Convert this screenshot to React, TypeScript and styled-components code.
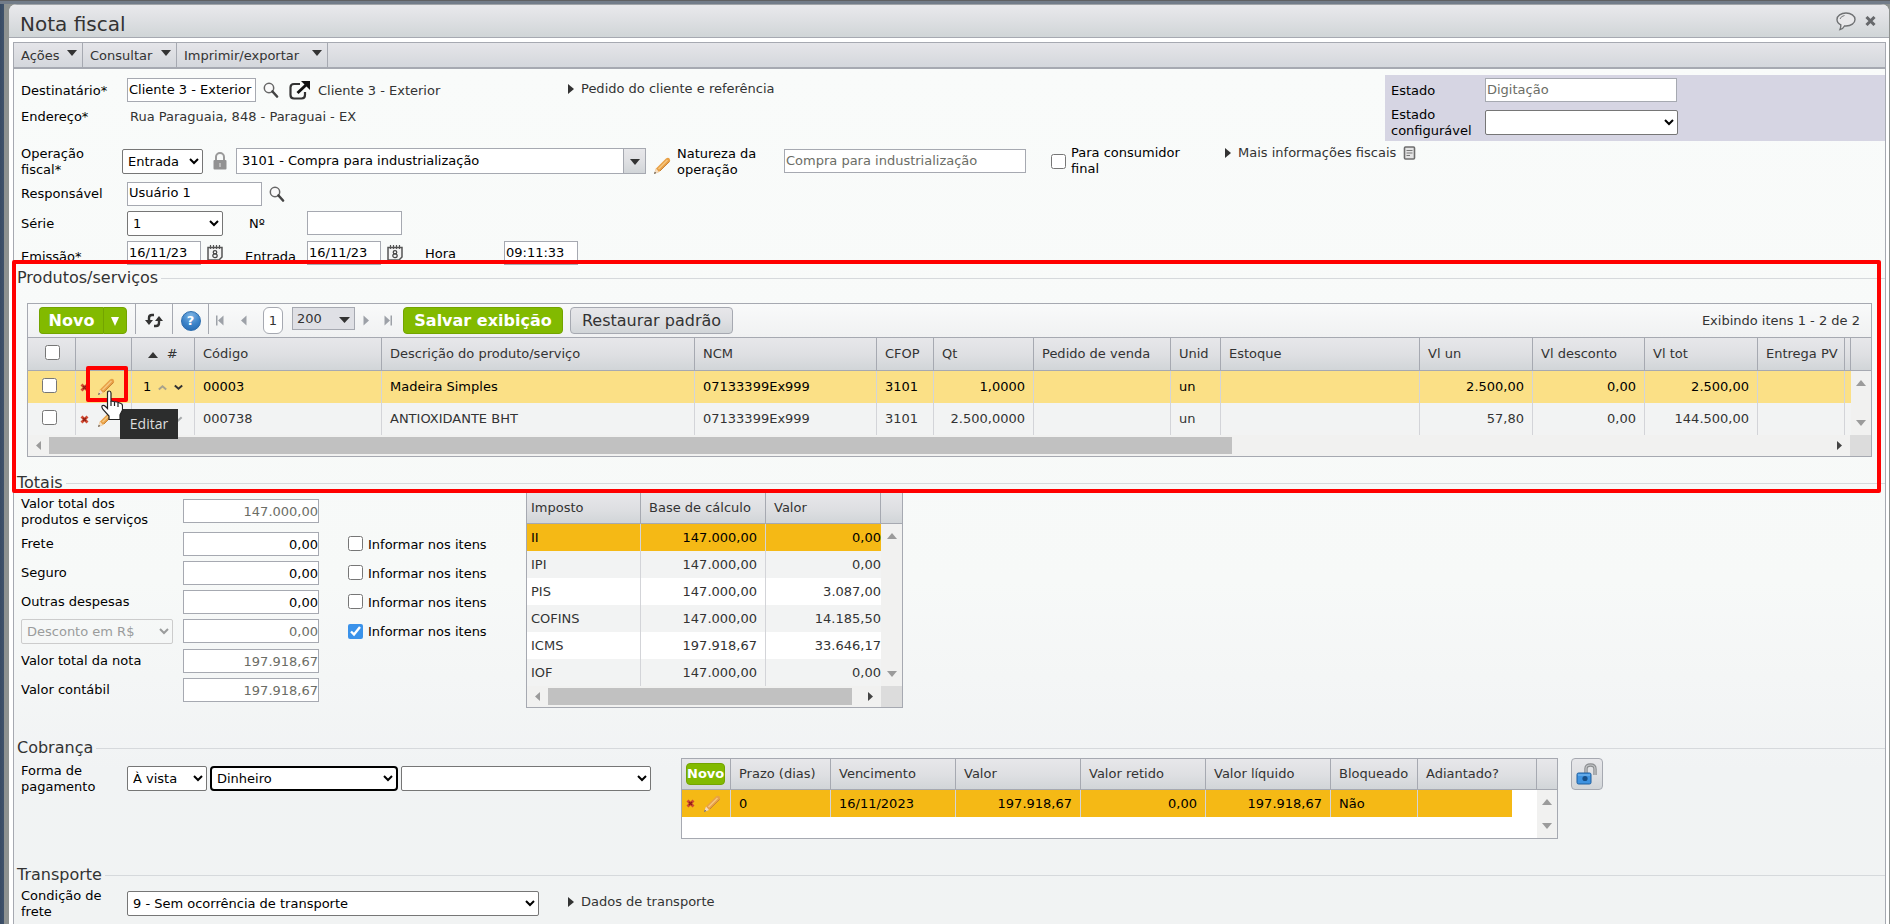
import React from "react";
import styled, { createGlobalStyle, css } from "styled-components";

const line = "#a6a9b1";
const softLine = "#d3d4d8";
const headFill = "linear-gradient(#e7e7ea, #dfe0e3 50%, #d1d5d8)";

const GlobalStyle = createGlobalStyle`
  * { box-sizing: border-box; }
  body {
    margin: 0;
    background: #3a4d66;
    color: #333;
    font: 13px/16px "DejaVu Sans", Verdana, sans-serif;
  }
  button, input, select { font: inherit; color: inherit; }
  a { color: inherit; text-decoration: none; }
  table { border-collapse: separate; border-spacing: 0; table-layout: fixed; }
`;

/* ---------- window ---------- */

const Desktop = styled.div`
  min-height: 100vh;
  display: flex;
  padding: 4px 1px 0 4px;
  background: linear-gradient(#5f6062 0 1px, #727c89 1px 4px, transparent 4px),
    linear-gradient(90deg, #384b64, #3f526b 4px, #8e9290 4px 100%);
`;

const Window = styled.div`
  flex: 1;
  min-width: 0;
  display: flex;
  flex-direction: column;
  margin-left: 5px;
  border-radius: 8px 8px 0 0;
  background: #fff;
  overflow: hidden;
`;

const TitleBar = styled.header`
  display: flex;
  align-items: center;
  gap: 9px;
  height: 34px;
  padding: 0 13px 0 11px;
  border-top: 1px solid #a0a4a8;
  border-bottom: 1px solid ${line};
  background: linear-gradient(#e9e9ec, #dddfe2 50%, #d0d5d7);
`;

const WindowTitle = styled.h1`
  flex: 1;
  margin: 0;
  padding-top: 6px;
  font-size: 20px;
  line-height: 24px;
  font-weight: 400;
`;

const IconButton = styled.button`
  display: inline-flex;
  flex: none;
  padding: 0;
  border: 0;
  background: none;
  cursor: pointer;
  svg { display: block; }
`;

const Frame = styled.div`
  flex: 1;
  display: flex;
  flex-direction: column;
  margin: 4px 3px 0 4px;
  border: 1px solid ${line};
  border-bottom: 0;
`;

const MenuBar = styled.nav`
  display: flex;
  height: 26px;
  border-bottom: 2px solid ${line};
  background: linear-gradient(#e5e5e9, #d4d7dc);
`;

const MenuButton = styled.button<{ $w: number }>`
  display: flex;
  align-items: center;
  justify-content: space-between;
  min-width: ${(p) => p.$w}px;
  padding: 2px 5px 0 7px;
  border: 0;
  border-right: 1px solid ${line};
  background: none;
  svg { margin-bottom: 6px; }
`;

const Content = styled.main`
  flex: 1;
  background: linear-gradient(#f9fbfa, #f7f9f8 60%, #f1f3f4 82%, #f1f3f3);
`;

/* ---------- form parts ---------- */

const Row = styled.div<{ $h: number }>`
  display: flex;
  align-items: center;
  min-height: ${(p) => p.$h}px;
  padding-left: 7px;
`;

const Label = styled.label<{ $w?: number; $low?: boolean }>`
  flex: none;
  width: ${(p) => (p.$w ? p.$w + "px" : "auto")};
  padding-top: ${(p) => (p.$low ? 7 : 1)}px;
  color: #000;
`;

const Static = styled.span`
  padding-top: 1px;
`;

const TextBox = styled.input<{ $w: number; $num?: boolean }>`
  flex: none;
  width: ${(p) => p.$w}px;
  height: 24px;
  padding: 0 1px 2px;
  border: 1px solid ${line};
  border-radius: 0;
  background: #fff;
  color: #000;
  outline: 0;
  ${(p) => p.$num && css`padding: 1px 0 0; text-align: right;`}
  &:read-only { color: #6b6d66; }
`;

const Select = styled.select<{ $w: number; $strong?: boolean }>`
  flex: none;
  width: ${(p) => p.$w}px;
  height: 25px;
  padding: 0 1px;
  border: ${(p) => (p.$strong ? "2px solid #000" : "1px solid #767676")};
  border-radius: ${(p) => (p.$strong ? 4 : 2)}px;
  background-color: #fff;
  color: #000;
  &:disabled { border-color: #ccc; color: #9a9c9c; background-color: transparent; opacity: 1; }
`;

const Check = styled.input.attrs({ type: "checkbox" })`
  flex: none;
  width: 15px;
  height: 15px;
  margin: 0;
  accent-color: #3a92ea;
`;

const CheckLabel = styled.label<{ $w?: number }>`
  display: flex;
  align-items: center;
  gap: 5px;
  width: ${(p) => (p.$w ? p.$w + "px" : "auto")};
  color: #000;
`;

const CheckText = styled.span`
  padding-top: 2px;
`;

const Space = styled.span<{ $w: number; $low?: boolean }>`
  flex: none;
  display: inline-flex;
  align-items: center;
  justify-content: center;
  gap: 10px;
  width: ${(p) => p.$w}px;
  padding-top: ${(p) => (p.$low ? 10 : 0)}px;
`;

const Disclosure = styled.a<{ $high?: boolean }>`
  display: flex;
  align-items: center;
  gap: 7px;
  padding-bottom: ${(p) => (p.$high ? 16 : 2)}px;
`;

const TopArea = styled.div`
  display: flex;
  align-items: flex-start;
  padding: 6px 0 2px;
`;

const TopLeft = styled.div`
  flex: 1;
`;

const DestinationPair = styled.div`
  display: flex;
  align-items: center;
  width: 441px;
`;

const StatePanel = styled.div`
  display: grid;
  grid-template-columns: 94px 1fr;
  align-items: center;
  row-gap: 4px;
  width: 500px;
  padding: 3px 6px 2px;
  background: #d6d5e3;
`;

const Combo = styled.div`
  display: flex;
  width: 410px;
  height: 26px;
  border: 1px solid ${line};
  background: #fff;
  input { flex: 1; min-width: 0; border: 0; padding: 0 5px; background: none; color: #000; outline: 0; }
  button { width: 22px; padding: 0; border: 0; border-left: 1px solid ${line}; background: ${headFill}; }
`;

/* ---------- sections ---------- */

const Section = styled.section<{ $after: number }>`
  position: relative;
  padding-bottom: ${(p) => p.$after}px;
`;

const SectionTitle = styled.h2`
  display: flex;
  align-items: center;
  gap: 3px;
  margin: 0;
  padding-left: 3px;
  font-size: 16px;
  line-height: 20px;
  font-weight: 400;
  &::after { content: ""; flex: 1; height: 1px; background: #d6d9dc; }
`;

const Highlight = styled.div`
  position: absolute;
  inset: -8px 4px -20px -2px;
  border: 4px solid #f00;
  border-radius: 2px;
  pointer-events: none;
  z-index: 3;
`;

/* ---------- product grid ---------- */

const Grid = styled.div`
  margin: 15px 13px 0 13px;
  border: 1px solid ${line};
`;

const Toolbar = styled.div`
  display: flex;
  align-items: center;
  height: 33px;
  padding: 0 11px;
  background: linear-gradient(#f9fafa, #f0f1f2);
`;

const Divider = styled.i`
  align-self: flex-start;
  width: 1px;
  height: 30px;
  background: ${line};
`;

const Button = styled.button<{ $green?: boolean; $w?: number }>`
  flex: none;
  height: 27px;
  width: ${(p) => (p.$w ? p.$w + "px" : "auto")};
  padding: 0;
  border: 1px solid ${(p) => (p.$green ? "#73a400" : line)};
  border-radius: 4px;
  background: ${(p) => (p.$green ? "#82ba00" : headFill)};
  color: ${(p) => (p.$green ? "#fff" : "#333")};
  font-size: 16px;
  line-height: 20px;
  font-weight: ${(p) => (p.$green ? 700 : 400)};
  white-space: nowrap;
`;

const SplitButton = styled.div`
  display: flex;
  margin-right: 8px;
  button:first-child { border-right: 0; border-radius: 4px 0 0 4px; }
  button:last-child { border-radius: 0 4px 4px 0; }
`;

const PageBox = styled.input`
  width: 20px;
  height: 27px;
  padding: 0;
  border: 1px solid ${line};
  border-radius: 6px;
  background: #fff;
  text-align: center;
  outline: 0;
`;

const SizeSelect = styled.span`
  position: relative;
  width: 63px;
  margin: 0 8px 4px 9px;
  select {
    appearance: none;
    width: 100%;
    height: 23px;
    padding: 0 4px;
    border: 1px solid ${line};
    border-radius: 0;
    background: #dfe0e5;
  }
  svg { position: absolute; right: 5px; top: 10px; pointer-events: none; }
`;

const HelpButton = styled.button`
  width: 20px;
  height: 20px;
  padding: 0;
  border: 1px solid #2a6cae;
  border-radius: 50%;
  background: radial-gradient(circle at 50% 20%, #7db4e4, #3b82c8 55%, #2466ae);
  color: #fff;
  font-weight: 700;
  line-height: 18px;
`;

const Count = styled.span`
  margin-left: auto;
`;

const Table = styled.table`
  width: 100%;
`;

const Th = styled.th<{ $h: number; $x?: number; $center?: boolean; $last?: boolean; $open?: boolean }>`
  height: ${(p) => p.$h}px;
  padding: 0 0 0 ${(p) => p.$x ?? 8}px;
  border-bottom: 1px solid ${line};
  border-top: ${(p) => (p.$open ? "0" : "1px solid " + line)};
  border-right: ${(p) => (p.$last ? "0" : "1px solid " + line)};
  background: ${headFill};
  font-weight: 400;
  text-align: ${(p) => (p.$center ? "center" : "left")};
  white-space: nowrap;
`;

const Td = styled.td<{ $right?: boolean; $x?: number; $edge?: boolean }>`
  padding: 0 ${(p) => p.$x ?? 8}px;
  border-right: ${(p) => (p.$edge ? "0" : "1px solid " + softLine)};
  text-align: ${(p) => (p.$right ? "right" : "left")};
  white-space: nowrap;
`;

const Tr = styled.tr<{ $h: number; $fill: string; $on?: boolean }>`
  height: ${(p) => p.$h}px;
  color: ${(p) => (p.$on ? "#000" : "#333")};
  td { background: ${(p) => p.$fill}; }
  td.scroll { background: #f1f1f0; }
  td.blank { background: #fff; }
`;

const Actions = styled.div`
  position: relative;
  display: flex;
  align-items: center;
  gap: 8px;
`;

const Order = styled.div`
  display: flex;
  align-items: center;
  gap: 7px;
`;

const OrderNumber = styled.span`
  width: 8px;
`;

const EditHighlight = styled.div`
  position: absolute;
  left: 6px;
  top: -12px;
  width: 42px;
  height: 36px;
  border: 4px solid #f00;
  border-radius: 2px;
  pointer-events: none;
`;

const Cursor = styled.svg`
  position: absolute;
  left: 21px;
  top: 12px;
  z-index: 2;
  pointer-events: none;
`;

const Tooltip = styled.div`
  position: absolute;
  left: 40px;
  top: 31px;
  z-index: 1;
  width: 58px;
  padding: 7px 0;
  background: #2c2d2d;
  color: #ddd;
  font: 14px/16px "Open Sans", sans-serif;
  text-align: center;
`;

const VScroll = styled.div<{ $h: number }>`
  display: flex;
  flex-direction: column;
  align-items: center;
  justify-content: space-between;
  height: ${(p) => p.$h}px;
  padding: 9px 0;
`;

const HScroll = styled.div`
  display: flex;
  height: 21px;
  background: #f1f1f0;
`;

const HTrack = styled.div`
  flex: 1;
  display: flex;
  align-items: center;
  padding: 0 8px;
`;

const Thumb = styled.div<{ $share: string }>`
  width: ${(p) => p.$share};
  height: 17px;
  margin: 0 auto 0 8px;
  background: #c1c1c1;
`;

const Corner = styled.div`
  width: 21px;
  background: #dcdcdc;
`;

/* ---------- totals & billing ---------- */

const Split = styled.div`
  display: flex;
  align-items: flex-start;
`;

const TotalsForm = styled.div`
  width: 512px;
`;

const TaxBox = styled.div`
  width: 377px;
  border: 1px solid ${line};
  border-top: 0;
`;

const BillingForm = styled.div`
  width: 667px;
  padding-top: 4px;
  ${Row} { gap: 3px; }
  label { margin-right: -3px; }
`;

const BillingBox = styled.div`
  width: 877px;
  height: 81px;
  border: 1px solid ${line};
  background: #fff;
`;

const SmallNew = styled.button`
  display: block;
  width: 39px;
  height: 22px;
  padding: 0;
  border: 1px solid #73a400;
  border-radius: 4px;
  background: #82ba00;
  color: #fff;
  font-weight: 700;
`;

const UnlockButton = styled.button`
  display: grid;
  place-items: center;
  width: 32px;
  height: 32px;
  margin-left: 13px;
  padding: 0;
  border: 1px solid ${line};
  border-radius: 4px;
  background: ${headFill};
`;

/* ---------- icons ---------- */

const Tri = ({ dir, w, h, fill = "#333" }: { dir: "up" | "down" | "left" | "right"; w: number; h: number; fill?: string }) => {
  const pts = {
    down: `0,0 ${w},0 ${w / 2},${h}`,
    up: `0,${h} ${w},${h} ${w / 2},0`,
    right: `0,0 ${w},${h / 2} 0,${h}`,
    left: `${w},0 0,${h / 2} ${w},${h}`,
  }[dir];
  return (
    <svg width={w} height={h}>
      <polygon points={pts} fill={fill} />
    </svg>
  );
};

const Magnifier = () => (
  <svg width="16" height="16" viewBox="0 0 16 16" fill="none">
    <circle cx="6" cy="6" r="4.7" fill="#fafafa" stroke="#666" strokeWidth="1.5" />
    <path d="M9.500 9.500 14 14.500" stroke="#444" strokeWidth="2.600" strokeLinecap="round" />
  </svg>
);

const OpenIcon = () => (
  <svg width="22" height="19" viewBox="0 0 22 19" fill="none">
    <path d="M11 3H5Q1.500 3 1.500 6.500V14Q1.500 17.500 5 17.500H12.500Q16 17.500 16 14V11" stroke="#333" strokeWidth="2.200" />
    <path d="M8.500 12 17 4" stroke="#111" strokeWidth="3" />
    <path d="M12 0H21V9L18 6 15 3Z" fill="#111" />
  </svg>
);

const Lock = () => (
  <svg width="14" height="18" viewBox="0 0 14 18" fill="none">
    <path d="M3 9V5a4 4 0 0 1 8 0V9" stroke="#9a9a9a" strokeWidth="2" />
    <rect x="0.500" y="8" width="13" height="9.500" rx="1" fill="#929292" />
    <path d="M6 11H8V15H6Z" fill="#bbb" />
  </svg>
);

const Pencil = () => (
  <svg width="18" height="18" viewBox="0 0 18 18">
    <path d="M1 17 3 11.500 13 1.500Q15 0 16.500 1.500T16.500 5L6 15Z" fill="#e8a046" />
    <path d="M5.500 12 14.500 3" stroke="#f6c67e" strokeWidth="1.600" />
    <path d="M7 14 16.500 4.500" stroke="#c98436" strokeWidth="1" />
    <path d="M1 17 3 11.500 6 15Z" fill="#f4dcc0" />
    <path d="M1 17 1.800 14.700 3.300 16Z" fill="#555" />
  </svg>
);

const Remove = () => (
  <svg width="9" height="9" viewBox="0 0 9 9">
    <path d="M1.500 1.500 7.500 7.500M7.500 1.500 1.500 7.500" stroke="#cf4a32" strokeWidth="2.800" />
    <path d="M3 3 6 6M6 3 3 6" stroke="#8f1d12" strokeWidth="1.200" />
  </svg>
);

const Calendar = () => (
  <svg width="16" height="16" viewBox="0 0 16 16" fill="none">
    <path d="M1 2.500H15V12L12 15H1Z" fill="#f4f4f4" stroke="#555" strokeWidth="1.500" />
    <path d="M3.500 0V4M6.500 0V4M9.500 0V4M12.500 0V4" stroke="#555" strokeWidth="1.200" />
    <ellipse cx="8" cy="7.300" rx="1.800" ry="1.600" stroke="#444" strokeWidth="1.200" />
    <ellipse cx="8" cy="10.800" rx="2.200" ry="1.900" stroke="#444" strokeWidth="1.200" />
  </svg>
);

const Document = () => (
  <svg width="13" height="14" viewBox="0 0 13 14" fill="none">
    <rect x="1.500" y="1" width="10" height="12" rx="1" fill="#e4e4e4" stroke="#6d6d6d" strokeWidth="1.600" />
    <path d="M3.500 4.500H9.500M3.500 7H9.500M3.500 9.500H7" stroke="#777" strokeWidth="1.200" />
  </svg>
);

const Bubble = () => (
  <svg width="20" height="19" viewBox="0 0 20 19" fill="none">
    <path d="M10 1C15 1 19 3.700 19 7.500S15 14 10 14H8.500Q7 17 4 17.500 5 15.500 4.800 12.800C2.500 11.700 1 9.700 1 7.500 1 3.700 5 1 10 1Z" fill="#e8e8ea" stroke="#6f7173" strokeWidth="1.400" />
    <path d="M4 7Q5 4 8.500 3.500" stroke="#77797b" strokeWidth="1" />
  </svg>
);

const Close = () => (
  <svg width="11" height="10" viewBox="0 0 11 10">
    <path d="M1.500 1 9.500 9M9.500 1 1.500 9" stroke="#66686b" strokeWidth="3" />
  </svg>
);

const Refresh = () => (
  <svg width="18" height="15" viewBox="0 0 18 15" fill="none">
    <path d="M9 2H7Q4 2 4 5V8" stroke="#333" strokeWidth="2.400" />
    <path d="M0 7H8L4 12Z" fill="#333" />
    <path d="M9 13H11Q14 13 14 10V7" stroke="#333" strokeWidth="2.400" />
    <path d="M10 8H18L14 3Z" fill="#333" />
  </svg>
);

const Step = ({ back, end }: { back?: boolean; end?: boolean }) => (
  <svg width="8" height="11" viewBox="0 0 8 11">
    <g transform={back ? "" : "matrix(-1 0 0 1 8 0)"}>
      <path d="M7.500 0.500V10.500L2 5.500Z" fill="#9da1a8" />
      {end && <path d="M0 0.500H1.500V10.500H0Z" fill="#9da1a8" />}
    </g>
  </svg>
);

const Chevron = ({ up, color }: { up?: boolean; color: string }) => (
  <svg width="11" height="7" viewBox="0 0 11 7" fill="none">
    <path d={up ? "M1 6 5.500 2 10 6" : "M1 1 5.500 5 10 1"} stroke={color} strokeWidth="2.400" />
  </svg>
);

const OpenPadlock = () => (
  <svg width="22" height="22" viewBox="0 0 22 22" fill="none">
    <path d="M10 10V5.500Q10 2 14.500 2T19 6V12" stroke="#8b8d90" strokeWidth="3.400" />
    <path d="M10 10V5.500Q10 2 14.500 2T19 6V12" stroke="#c4c6c8" strokeWidth="1.200" />
    <rect x="1" y="10" width="14" height="11" rx="1.500" fill="#3f93e0" stroke="#1f5f9f" />
    <path d="M2 12H14" stroke="#86c0f2" />
    <circle cx="9" cy="15.500" r="2.600" fill="#174f88" />
  </svg>
);

/* ---------- data ---------- */

const menus = [
  { name: "Ações", width: 69 },
  { name: "Consultar", width: 94 },
  { name: "Imprimir/exportar", width: 151 },
];

const columns: { title: string; width?: number; right?: boolean }[] = [
  { title: "Código", width: 187 },
  { title: "Descrição do produto/serviço", width: 313 },
  { title: "NCM", width: 182 },
  { title: "CFOP", width: 57 },
  { title: "Qt", width: 100, right: true },
  { title: "Pedido de venda", width: 137 },
  { title: "Unid", width: 50 },
  { title: "Estoque" },
  { title: "Vl un", width: 113, right: true },
  { title: "Vl desconto", width: 112, right: true },
  { title: "Vl tot", width: 113, right: true },
  { title: "Entrega PV", width: 87 },
];

const products = [
  ["00003", "Madeira Simples", "07133399Ex999", "3101", "1,0000", "", "un", "", "2.500,00", "0,00", "2.500,00", ""],
  ["000738", "ANTIOXIDANTE BHT", "07133399Ex999", "3101", "2.500,0000", "", "un", "", "57,80", "0,00", "144.500,00", ""],
];

const taxes = [
  ["II", "147.000,00", "0,00"],
  ["IPI", "147.000,00", "0,00"],
  ["PIS", "147.000,00", "3.087,00"],
  ["COFINS", "147.000,00", "14.185,50"],
  ["ICMS", "197.918,67", "33.646,17"],
  ["IOF", "147.000,00", "0,00"],
];

const billingColumns = [
  { title: "Prazo (dias)", width: 100, value: "0" },
  { title: "Vencimento", width: 125, value: "16/11/2023" },
  { title: "Valor", width: 125, value: "197.918,67", right: true },
  { title: "Valor retido", width: 125, value: "0,00", right: true },
  { title: "Valor líquido", width: 125, value: "197.918,67", right: true },
  { title: "Bloqueado", width: 87, value: "Não" },
];

/* ---------- screen parts ---------- */

const General = () => (
  <>
    <TopArea>
      <TopLeft>
        <Row $h={30}>
          <DestinationPair>
            <Label $w={106} htmlFor="dest">Destinatário*</Label>
            <TextBox id="dest" $w={129} defaultValue="Cliente 3 - Exterior" />
            <Space $w={62}>
              <IconButton aria-label="Buscar destinatário"><Magnifier /></IconButton>
              <IconButton aria-label="Abrir destinatário"><OpenIcon /></IconButton>
            </Space>
            <Static>Cliente 3 - Exterior</Static>
          </DestinationPair>
          <Space $w={106} />
          <Disclosure href="#pedido"><Tri dir="right" w={6} h={10} />Pedido do cliente e referência</Disclosure>
        </Row>
        <Row $h={22}>
          <Label as="span" $w={109}>Endereço*</Label>
          <Static>Rua Paraguaia, 848 - Paraguai - EX</Static>
        </Row>
      </TopLeft>
      <StatePanel>
        <Label htmlFor="estado">Estado</Label>
        <TextBox id="estado" $w={192} readOnly value="Digitação" />
        <Label htmlFor="config">Estado configurável</Label>
        <Select id="config" $w={193}><option></option></Select>
      </StatePanel>
    </TopArea>

    <Row $h={36}>
      <Label $w={101} htmlFor="oper">Operação<br />fiscal*</Label>
      <Select id="oper" $w={81}><option>Entrada</option></Select>
      <Space $w={33}><Lock /></Space>
      <Combo>
        <input aria-label="Operação" defaultValue="3101 - Compra para industrialização" />
        <button aria-label="Abrir lista"><Tri dir="down" w={10} h={6} /></button>
      </Combo>
      <Space $w={31} $low><IconButton aria-label="Editar operação"><Pencil /></IconButton></Space>
      <Label $w={107} htmlFor="nat">Natureza da operação</Label>
      <TextBox id="nat" $w={242} readOnly value="Compra para industrialização" />
      <Space $w={25} />
      <CheckLabel $w={174}><Check /><span>Para consumidor<br />final</span></CheckLabel>
      <Disclosure href="#fiscais" $high><Tri dir="right" w={6} h={10} />Mais informações fiscais <Document /></Disclosure>
    </Row>

    <Row $h={29}>
      <Label $w={106} htmlFor="resp">Responsável</Label>
      <TextBox id="resp" $w={135} defaultValue="Usuário 1" />
      <Space $w={30}><IconButton aria-label="Buscar responsável"><Magnifier /></IconButton></Space>
    </Row>

    <Row $h={30}>
      <Label $w={106} htmlFor="serie">Série</Label>
      <Select id="serie" $w={96}><option>1</option></Select>
      <Space $w={26} />
      <Label $w={58} htmlFor="num">Nº</Label>
      <TextBox id="num" $w={95} defaultValue="" />
    </Row>

    <Row $h={30}>
      <Label $w={106} $low htmlFor="emissao">Emissão*</Label>
      <TextBox id="emissao" $w={74} defaultValue="16/11/23" />
      <Space $w={28}><IconButton aria-label="Calendário da emissão"><Calendar /></IconButton></Space>
      <Space $w={16} />
      <Label $w={62} $low htmlFor="entrada">Entrada</Label>
      <TextBox id="entrada" $w={74} defaultValue="16/11/23" />
      <Space $w={28}><IconButton aria-label="Calendário da entrada"><Calendar /></IconButton></Space>
      <Space $w={16} />
      <Label $w={79} htmlFor="hora">Hora</Label>
      <TextBox id="hora" $w={74} defaultValue="09:11:33" />
    </Row>
  </>
);

const Products = () => (
  <Section $after={16}>
    <SectionTitle>Produtos/serviços</SectionTitle>
    <Grid>
      <Toolbar>
        <SplitButton>
          <Button $green $w={64}>Novo</Button>
          <Button $green $w={24} aria-label="Mais opções"><Tri dir="down" w={8} h={9} fill="#fff" /></Button>
        </SplitButton>
        <Divider />
        <Space $w={36}><IconButton aria-label="Atualizar"><Refresh /></IconButton></Space>
        <Divider />
        <Space $w={35}><HelpButton>?</HelpButton></Space>
        <Divider />
        <Space $w={22}><IconButton aria-label="Primeira"><Step back end /></IconButton></Space>
        <Space $w={24}><IconButton aria-label="Anterior"><Step back /></IconButton></Space>
        <Space $w={8} />
        <PageBox aria-label="Página" defaultValue="1" />
        <SizeSelect>
          <select aria-label="Itens por página"><option>200</option></select>
          <Tri dir="down" w={11} h={6} />
        </SizeSelect>
        <IconButton aria-label="Próxima"><Step /></IconButton>
        <Space $w={13} />
        <IconButton aria-label="Última"><Step end /></IconButton>
        <Space $w={11} />
        <Button $green $w={160}>Salvar exibição</Button>
        <Space $w={7} />
        <Button $w={163}>Restaurar padrão</Button>
        <Count>Exibindo itens 1 - 2 de 2</Count>
      </Toolbar>
      <Table>
        <colgroup>
          <col width="48" /><col width="56" /><col width="63" />
          {columns.map((c, i) => <col key={i} width={c.width} />)}
          <col width="6" /><col width="20" />
        </colgroup>
        <thead>
          <tr>
            <Th $h={34} $x={1} $center><Check aria-label="Selecionar todos" /></Th>
            <Th $h={34} />
            <Th $h={34} $x={0} $center><Tri dir="up" w={10} h={6} /> &nbsp;#</Th>
            {columns.map((c, i) => <Th key={i} $h={34}>{c.title}</Th>)}
            <Th $h={34} $x={0} />
            <Th $h={34} $x={0} $last />
          </tr>
        </thead>
        <tbody>
          {products.map((row, r) => (
            <Tr key={row[0]} $h={32} $on={r === 0} $fill={r === 0 ? "#fbe086" : "#f2f3f3"}>
              <Td $x={14}><Check aria-label={"Selecionar " + row[1]} /></Td>
              <Td $x={4}>
                <Actions>
                  <IconButton aria-label="Excluir"><Remove /></IconButton>
                  <IconButton aria-label="Editar"><Pencil /></IconButton>
                  {r === 0 && (
                    <>
                      <EditHighlight />
                      <Tooltip role="tooltip">Editar</Tooltip>
                      <Cursor width="22" height="31" viewBox="0 0 22 31">
                        <path d="M6.500 3Q6.500 1 8.200 1T10 3V11L12.500 11.500 16 12 20 13.500Q21.500 14 21.500 16V20L19 25V29.500H8V26L2 19.500Q0 16.500 1.500 15.500 3 15 4.500 16.500L6.500 18.500Z" fill="#fff" stroke="#222" strokeWidth="1.200" />
                        <path d="M10 11V16M13.500 12V16M17 13V17" stroke="#222" strokeWidth="1.200" />
                      </Cursor>
                    </>
                  )}
                </Actions>
              </Td>
              <Td $x={11}>
                <Order>
                  <OrderNumber>{r === 0 && "1"}</OrderNumber>
                  <Chevron up color={r === 0 ? "#a9a38c" : "#333"} />
                  <Chevron color={r === 0 ? "#333" : "#a8abad"} />
                </Order>
              </Td>
              {row.map((v, i) => <Td key={i} $right={columns[i].right}>{v}</Td>)}
              <Td $x={0} $edge />
              {r === 0 && (
                <Td className="scroll" rowSpan={2} $x={0} $edge>
                  <VScroll $h={64}>
                    <Tri dir="up" w={10} h={6} fill="#9b9b9b" />
                    <Tri dir="down" w={10} h={6} fill="#9b9b9b" />
                  </VScroll>
                </Td>
              )}
            </Tr>
          ))}
        </tbody>
      </Table>
      <HScroll>
        <HTrack>
          <Tri dir="left" w={5} h={9} fill="#9b9b9b" />
          <Thumb $share="65.5%" />
          <Tri dir="right" w={5} h={9} fill="#444" />
        </HTrack>
        <Corner />
      </HScroll>
    </Grid>
    <Highlight />
  </Section>
);

const TotalRow = ({ id, label, value, editable, check, checked }: {
  id: string; label: string; value: string; editable?: boolean; check?: boolean; checked?: boolean;
}) => (
  <Row $h={29}>
    <Label $w={162} htmlFor={id}>{label}</Label>
    <TextBox id={id} $w={136} $num defaultValue={value} readOnly={!editable} />
    <Space $w={29} />
    {check && <CheckLabel><Check defaultChecked={checked} /><CheckText>Informar nos itens</CheckText></CheckLabel>}
  </Row>
);

const Totals = () => (
  <Section $after={30}>
    <SectionTitle>Totais</SectionTitle>
    <Split>
      <TotalsForm>
        <Row $h={36}>
          <Label $w={162} htmlFor="vtp">Valor total dos<br />produtos e serviços</Label>
          <TextBox id="vtp" $w={136} $num readOnly value="147.000,00" />
        </Row>
        <TotalRow id="frete" label="Frete" value="0,00" editable check />
        <TotalRow id="seguro" label="Seguro" value="0,00" editable check />
        <TotalRow id="outras" label="Outras despesas" value="0,00" editable check />
        <Row $h={30}>
          <Select $w={152} disabled aria-label="Tipo de desconto"><option>Desconto em R$</option></Select>
          <Space $w={10} />
          <TextBox aria-label="Desconto" $w={136} $num readOnly value="0,00" />
          <Space $w={29} />
          <CheckLabel><Check defaultChecked /><CheckText>Informar nos itens</CheckText></CheckLabel>
        </Row>
        <TotalRow id="vtn" label="Valor total da nota" value="197.918,67" />
        <TotalRow id="vc" label="Valor contábil" value="197.918,67" />
      </TotalsForm>
      <TaxBox>
        <Table>
          <colgroup><col width="114" /><col width="125" /><col /><col width="21" /></colgroup>
          <thead>
            <tr>
              <Th $h={31} $x={4} $open>Imposto</Th>
              <Th $h={31} $open>Base de cálculo</Th>
              <Th $h={31} $open>Valor</Th>
              <Th $h={31} $x={0} $open $last />
            </tr>
          </thead>
          <tbody>
            {taxes.map((t, i) => (
              <Tr key={t[0]} $h={27} $on={i === 0} $fill={i === 0 ? "#f5b915" : i % 2 ? "#f2f3f3" : "#fff"}>
                <Td $x={4}>{t[0]}</Td>
                <Td $right>{t[1]}</Td>
                <Td $right $x={0} $edge>{t[2]}</Td>
                {i === 0 && (
                  <Td className="scroll" rowSpan={6} $x={0} $edge>
                    <VScroll $h={162}>
                      <Tri dir="up" w={10} h={6} fill="#9b9b9b" />
                      <Tri dir="down" w={10} h={6} fill="#9b9b9b" />
                    </VScroll>
                  </Td>
                )}
              </Tr>
            ))}
          </tbody>
        </Table>
        <HScroll>
          <HTrack>
            <Tri dir="left" w={5} h={9} fill="#9b9b9b" />
            <Thumb $share="90%" />
            <Space $w={16} />
            <Tri dir="right" w={5} h={9} fill="#444" />
          </HTrack>
          <Corner />
        </HScroll>
      </TaxBox>
    </Split>
  </Section>
);

const Billing = () => (
  <Section $after={26}>
    <SectionTitle>Cobrança</SectionTitle>
    <Split>
      <BillingForm>
        <Row $h={32}>
          <Label $w={106} htmlFor="forma">Forma de pagamento</Label>
          <Select id="forma" $w={80}><option>À vista</option></Select>
          <Select $w={188} $strong aria-label="Meio de pagamento"><option>Dinheiro</option></Select>
          <Select $w={250} aria-label="Conta"><option></option></Select>
        </Row>
      </BillingForm>
      <BillingBox>
        <Table>
          <colgroup>
            <col width="49" />
            {billingColumns.map((c) => <col key={c.title} width={c.width} />)}
            <col width="94" /><col /><col width="20" />
          </colgroup>
          <thead>
            <tr>
              <Th $h={31} $x={4} $open><SmallNew>Novo</SmallNew></Th>
              {billingColumns.map((c) => <Th key={c.title} $h={31} $open>{c.title}</Th>)}
              <Th $h={31} $open colSpan={2}>Adiantado?</Th>
              <Th $h={31} $x={0} $open $last />
            </tr>
          </thead>
          <tbody>
            <Tr $h={27} $on $fill="#f5b915">
              <Td $x={4}>
                <Actions>
                  <IconButton aria-label="Excluir parcela"><Remove /></IconButton>
                  <IconButton aria-label="Editar parcela"><Pencil /></IconButton>
                </Actions>
              </Td>
              {billingColumns.map((c) => <Td key={c.title} $right={c.right}>{c.value}</Td>)}
              <Td $edge />
              <Td className="blank" $x={0} $edge />
              <Td className="scroll" rowSpan={2} $x={0} $edge>
                <VScroll $h={48}>
                  <Tri dir="up" w={10} h={6} fill="#9b9b9b" />
                  <Tri dir="down" w={10} h={6} fill="#9b9b9b" />
                </VScroll>
              </Td>
            </Tr>
            <Tr $h={21} $fill="#fff"><Td colSpan={9} $edge /></Tr>
          </tbody>
        </Table>
      </BillingBox>
      <UnlockButton aria-label="Desbloquear"><OpenPadlock /></UnlockButton>
    </Split>
  </Section>
);

const Transport = () => (
  <Section $after={0}>
    <SectionTitle>Transporte</SectionTitle>
    <Row $h={36}>
      <Label $w={106} htmlFor="cond">Condição de<br />frete</Label>
      <Select id="cond" $w={412}><option>9 - Sem ocorrência de transporte</option></Select>
      <Space $w={29} />
      <Disclosure href="#transporte"><Tri dir="right" w={6} h={10} />Dados de transporte</Disclosure>
    </Row>
  </Section>
);

export default function App() {
  return (
    <>
      <GlobalStyle />
      <Desktop>
        <Window>
          <TitleBar>
            <WindowTitle>Nota fiscal</WindowTitle>
            <IconButton aria-label="Comentários"><Bubble /></IconButton>
            <IconButton aria-label="Fechar"><Close /></IconButton>
          </TitleBar>
          <Frame>
            <MenuBar>
              {menus.map((m) => (
                <MenuButton key={m.name} $w={m.width}>{m.name}<Tri dir="down" w={10} h={6} /></MenuButton>
              ))}
            </MenuBar>
            <Content>
              <General />
              <Products />
              <Totals />
              <Billing />
              <Transport />
            </Content>
          </Frame>
        </Window>
      </Desktop>
    </>
  );
}
